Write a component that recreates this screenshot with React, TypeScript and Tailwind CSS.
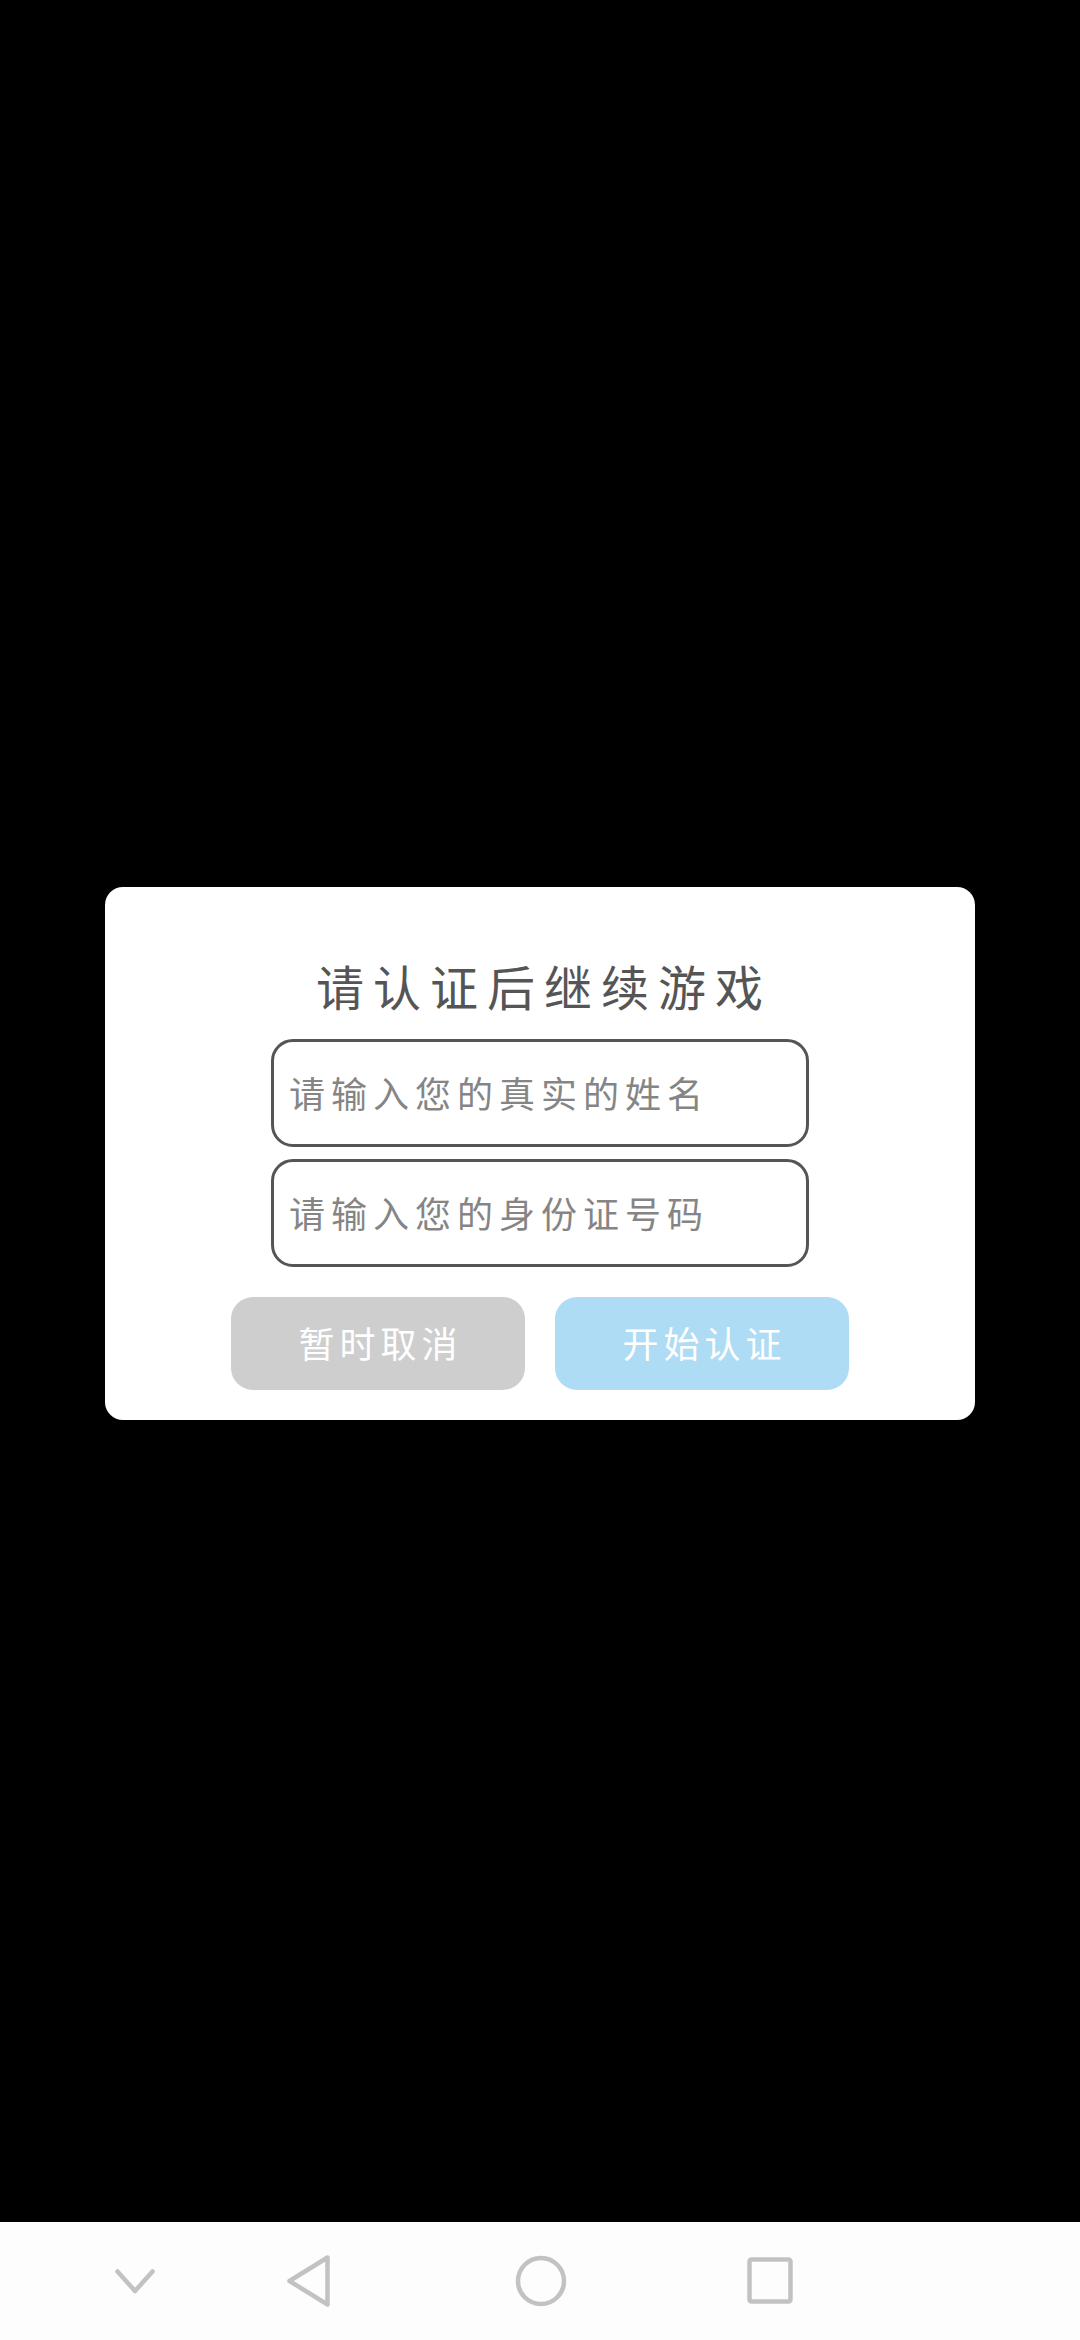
const cjk = "font-['Noto_Sans_CJK_SC',sans-serif]";

function Field({ placeholder }: { placeholder: string }) {
  return (
    <input
      placeholder={placeholder}
      className={`w-[538px] h-[108px] rounded-[22px] border-[3px] border-[#555555] bg-white pl-[15px] pb-[2px] text-[36px] tracking-[6px] text-[#555555] placeholder:text-[#858585] outline-none ${cjk}`}
    />
  );
}

export default function App() {
  return (
    <div className={`flex h-[2340px] w-[1080px] flex-col bg-black ${cjk}`}>
      <main className="flex-1 pt-[887px] pl-[105px]">
        <div className="flex h-[533px] w-[870px] flex-col items-center rounded-[18px] bg-white">
          <h1 className="mt-[64px] h-[88px] pl-[8px] text-[48px] leading-[68px] tracking-[9px] text-[#555555]">
            请认证后继续游戏
          </h1>
          <div className="flex flex-col gap-[12px]">
            <Field placeholder="请输入您的真实的姓名" />
            <Field placeholder="请输入您的身份证号码" />
          </div>
          <div className="mt-[30px] flex gap-[30px]">
            <button className="h-[93px] w-[294px] rounded-[22px] bg-[#cecece] pb-[4px] pl-[5px] text-[36px] tracking-[5px] text-white">
              暂时取消
            </button>
            <button className="h-[93px] w-[294px] rounded-[22px] bg-[#aedcf4] pb-[4px] pl-[5px] text-[36px] tracking-[5px] text-white">
              开始认证
            </button>
          </div>
        </div>
      </main>
      <nav className="flex h-[118px] items-start bg-[#fdfdfd] pl-[115px] pt-[33px]">
        <svg width="40" height="52" viewBox="0 0 40 52" fill="none" stroke="#c2c2c2" strokeWidth="4.500" strokeLinecap="round" strokeLinejoin="round">
          <path d="M2.500 16.500 L20 36 L37.500 16.500" />
        </svg>
        <svg className="ml-[132px]" width="44" height="52" viewBox="0 0 44 52" fill="none" stroke="#c2c2c2" strokeWidth="4.500" strokeLinejoin="round">
          <path d="M40.500 2.500 L2.500 26 L40.500 49.500 Z" />
        </svg>
        <svg className="ml-[184px]" width="52" height="52" viewBox="0 0 52 52" fill="none" stroke="#c2c2c2" strokeWidth="4.500">
          <circle cx="26" cy="26" r="23" />
        </svg>
        <svg className="ml-[180px] mt-[2px]" width="46" height="47" viewBox="0 0 46 47" fill="none" stroke="#c2c2c2" strokeWidth="4.500" strokeLinejoin="round">
          <rect x="2.500" y="2.500" width="41" height="42" rx="2" />
        </svg>
      </nav>
    </div>
  );
}
